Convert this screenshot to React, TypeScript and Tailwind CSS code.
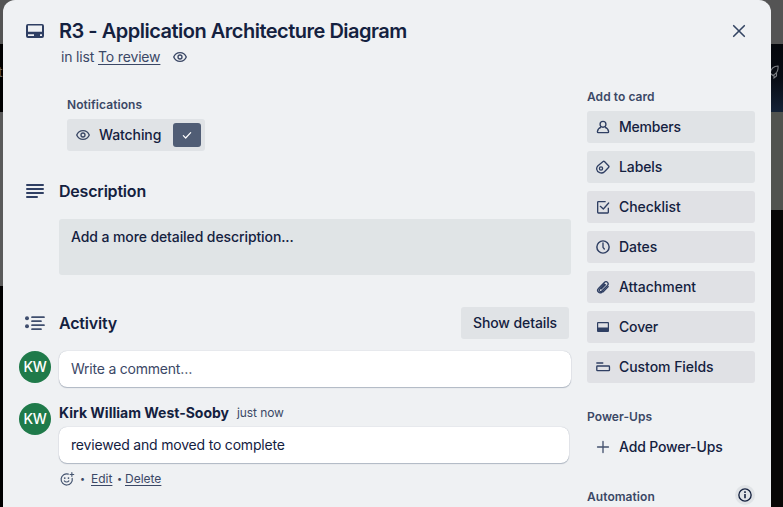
import type { ReactNode } from 'react';

const Svg = ({ size = 16, className = '', children }: { size?: number; className?: string; children: ReactNode }) => (
  <svg width={size} height={size} viewBox="0 0 24 24" fill="none" stroke="currentColor" strokeWidth="2" className={`shrink-0 ${className}`}>
    {children}
  </svg>
);

const EyeIcon = ({ className = '' }: { className?: string }) => (
  <Svg className={className}>
    <path d="M2.600 12C4.200 8 7.600 5.500 12 5.500s7.800 2.500 9.400 6.500c-1.600 4-5 6.500-9.400 6.500S4.200 16 2.600 12Z" />
    <circle cx="12" cy="12" r="3" />
  </Svg>
);

const CardIcon = () => (
  <Svg size={24}>
    <path fill="currentColor" stroke="none" fillRule="evenodd" d="M5 5a2 2 0 0 0-2 2v10a2 2 0 0 0 2 2h14a2 2 0 0 0 2-2V7a2 2 0 0 0-2-2H5Zm0 1.500h14v6.200H5V6.500Zm0 8.700h6v1.800H5v-1.800Zm12 0h2v1.800h-2v-1.800Z" />
  </Svg>
);

const LinesIcon = () => (
  <Svg size={24}>
    <path strokeLinecap="round" d="M4 6h16M4 10h16M4 14h16M4 18h10" />
  </Svg>
);

const ActivityIcon = () => (
  <Svg size={24}>
    <circle cx="4" cy="7.200" r="2" fill="currentColor" stroke="none" />
    <circle cx="4" cy="15.300" r="2" fill="currentColor" stroke="none" />
    <path strokeWidth="1.700" strokeLinecap="round" d="M9 6.200h12M9 10.200h9M9 14.200h12M9 18.200h9" />
  </Svg>
);

const MemberIcon = () => (
  <Svg>
    <circle cx="12" cy="8" r="4.400" />
    <path strokeLinejoin="round" d="M9 12.600C6 13.300 4 15.800 3.600 19c0 1 .4 1.500 1.200 1.500h14.400c.8 0 1.200-.5 1.200-1.500-.4-3.200-2.400-5.700-5.400-6.400" />
  </Svg>
);

const LabelIcon = () => (
  <Svg>
    <path strokeLinejoin="round" d="M12.200 3.800c.6-.5 1.400-.5 2 0l6.400 6.700c.5.600.5 1.400 0 2l-6.400 6.500A7 7 0 0 1 2.400 15c0-2 .7-3.700 2-4.900l7.800-6.300Z" />
    <circle cx="9" cy="14.300" r="2.400" />
  </Svg>
);

const ChecklistIcon = () => (
  <Svg>
    <path strokeLinejoin="round" d="M16 4H5a1 1 0 0 0-1 1v15a1 1 0 0 0 1 1h14a1 1 0 0 0 1-1v-7" />
    <path strokeLinecap="round" strokeLinejoin="round" d="m8 11 4.500 4L20.500 6" />
  </Svg>
);

const ClockIcon = () => (
  <Svg>
    <circle cx="12" cy="12" r="9.200" strokeWidth="2.200" />
    <path strokeLinecap="round" strokeLinejoin="round" d="M12 6v6.500l2 2.500" />
  </Svg>
);

const ClipIcon = () => (
  <Svg>
    <path strokeWidth="1.900" strokeLinecap="round" d="m11.400 19-.9.700c-1.800 1.400-4.100 1.200-5.400-.2-1.500-1.500-1.400-4 .1-5.500L14 5.200c1.400-1.400 3.500-1.500 4.800-.2 1.300 1.400 1.200 3.400-.1 4.800L10.300 18c-1.100 1-2.400 1-3.300.2-.9-1-.8-2.300.2-3.300l7.100-7M19.900 11.500l-7.600 7.600M15 8.200l.6.500-6 6.100" />
  </Svg>
);

const CoverIcon = () => (
  <Svg>
    <path fill="currentColor" stroke="none" fillRule="evenodd" d="M4.500 4.500A1.500 1.500 0 0 0 3 6v12a1.500 1.500 0 0 0 1.500 1.500h15A1.500 1.500 0 0 0 21 18V6a1.500 1.500 0 0 0-1.500-1.500h-15Zm.3 2h14.400v6.200H4.800V6.500Z" />
  </Svg>
);

const FieldsIcon = () => (
  <Svg>
    <path strokeLinecap="round" d="M2.700 6h9" />
    <rect x="2.700" y="10.500" width="19" height="7" rx="1" />
  </Svg>
);

const PlusIcon = () => (
  <Svg className="text-[#44516e]">
    <path strokeLinecap="round" d="M12 3.800v16.400M3.800 12h16.400" />
  </Svg>
);

const SmileIcon = () => (
  <Svg className="text-[#44546f]">
    <path strokeWidth="1.800" strokeLinecap="round" d="M14 4.600A8.400 8.400 0 1 0 19.800 11" />
    <path strokeWidth="1.700" strokeLinecap="round" d="M8 14.800c1.600 2.300 5.200 2.300 6.800 0M19.300 2.500v5.500M16.600 5.200h5.500" />
    <circle cx="8.600" cy="10.600" r="1.300" fill="currentColor" stroke="none" />
    <circle cx="14.200" cy="10.600" r="1.300" fill="currentColor" stroke="none" />
  </Svg>
);

const Avatar = () => (
  <div className="flex size-8 shrink-0 items-center justify-center rounded-full bg-[#1f7a4a] text-[14px] font-medium tracking-[-0.3px] text-white">KW</div>
);

const actions = [
  { label: 'Members', icon: <MemberIcon />, tone: 'bg-[#e0e3e6]', track: 'tracking-[-0.2px]' },
  { label: 'Labels', icon: <LabelIcon />, tone: 'bg-[#e0e3e6]', track: 'tracking-[-0.1px]' },
  { label: 'Checklist', icon: <ChecklistIcon />, tone: 'bg-[#e0e1e5]', track: 'tracking-[-0.05px]' },
  { label: 'Dates', icon: <ClockIcon />, tone: 'bg-[#e0e1e5]', track: 'tracking-[-0.05px]' },
  { label: 'Attachment', icon: <ClipIcon />, tone: 'bg-[#e0e1e5]', track: 'tracking-normal' },
  { label: 'Cover', icon: <CoverIcon />, tone: 'bg-[#e0e1e5]', track: 'tracking-[-0.15px]' },
  { label: 'Custom Fields', icon: <FieldsIcon />, tone: 'bg-[#e0e1e5]', track: 'tracking-[-0.05px]' },
];

const Backdrop = () => (
  <div className="absolute inset-0 flex justify-between bg-[#545454]">
    <div className="flex w-4 flex-col">
      <div className="h-11" />
      <div className="h-[68px] bg-black pt-[18px] text-[14px] text-[#686868]">
        <span className="-ml-0.5">t</span>
      </div>
      <div className="h-[174px] bg-[#5a5a5a]" />
      <div className="grow bg-black" />
    </div>
    <div className="flex w-4 flex-col">
      <div className="h-11" />
      <div className="flex h-[68px] justify-end bg-linear-to-b from-[#05070c] via-[#080c14] to-[#142237] pt-[21px] pr-1">
        <svg width="12" height="14" viewBox="0 0 12 14" fill="none" stroke="#7c7f84" strokeWidth="1.100" className="shrink-0">
          <path d="M11 1C7 1 4 4 3 8l3 2.500C10 8.500 11.500 5 11 1ZM4.500 5 1.500 6l-.5 3M7 10v3l2.500-2V8" />
        </svg>
      </div>
      <div className="h-[98px] bg-[#51534f]" />
      <div className="grow bg-[#080706]" />
    </div>
  </div>
);

export default function App() {
  return (
    <div className="relative h-[507px] w-[783px] overflow-hidden font-['Inter',sans-serif] text-[14px] leading-5 text-[#14213f]">
      <Backdrop />
      <div className="relative ml-[3px] flex h-full w-[768px] rounded-t-[12px] bg-[#eff1f3]">
        <main className="flex w-[568px] flex-col pl-4">
          <header className="mt-[19px] flex items-center text-[#2f3f63]">
            <div className="ml-1 w-9"><CardIcon /></div>
            <h1 className="text-[20px] leading-6 font-semibold tracking-[-0.5px] whitespace-nowrap text-[#14213f]">R3 - Application Architecture Diagram</h1>
          </header>
          <div className="mt-1 ml-[42px] flex h-5 items-center text-[#3b4866]">
            <p className="tracking-[-0.16px]">in list <span className="underline underline-offset-2">To review</span></p>
            <EyeIcon className="ml-3" />
          </div>

          <section className="mt-[30px] ml-12">
            <h3 className="h-4 text-[12px] leading-4 font-semibold tracking-[0.06px] text-[#3b4866]">Notifications</h3>
            <div className="mt-1.5 flex h-8 w-[138px] items-center rounded-[3px] bg-[#e0e3e6] pl-2">
              <EyeIcon className="text-[#3b4866]" />
              <span className="ml-2 w-[74px] font-medium tracking-[-0.1px]">Watching</span>
              <div className="flex h-6 w-7 items-center justify-center rounded-[3px] bg-[#505d75] text-white">
                <Svg><path strokeWidth="1.800" strokeLinecap="round" strokeLinejoin="round" d="m6.500 13 3.500 3.500 7.500-8" /></Svg>
              </div>
            </div>
          </section>

          <section className="mt-7">
            <div className="flex h-6 items-center">
              <div className="ml-1 w-9 text-[#2f3f63]"><LinesIcon /></div>
              <h2 className="text-[16px] font-semibold tracking-[-0.2px]">Description</h2>
            </div>
            <div className="mt-4 ml-10 h-14 w-[512px] rounded-[3px] bg-[#e0e4e6] px-3 py-2 font-medium tracking-[-0.1px]">Add a more detailed description...</div>
          </section>

          <section className="mt-8">
            <div className="flex h-8 items-center">
              <div className="ml-1 w-9 text-[#3f4e6e]"><ActivityIcon /></div>
              <h2 className="w-[402px] text-[16px] font-semibold tracking-[-0.2px]">Activity</h2>
              <button className="h-8 w-[108px] rounded-[3px] bg-[#e0e3e6] font-medium tracking-[-0.1px] whitespace-nowrap">Show details</button>
            </div>
            <div className="mt-3 flex gap-2">
              <Avatar />
              <div className="h-9 w-[512px] rounded-lg bg-white px-3 py-2 tracking-[-0.22px] text-[#3b4866] shadow-[0_1px_1px_#091e4240,0_0_1px_#091e424f]">Write a comment…</div>
            </div>
            <div className="mt-4 flex gap-2">
              <Avatar />
              <div className="w-[510px]">
                <div className="flex h-5 items-center">
                  <span className="font-bold">Kirk William West-Sooby</span>
                  <span className="ml-2 text-[12px] tracking-[-0.1px] text-[#3b4866]">just now</span>
                </div>
                <div className="mt-1 h-9 rounded-lg bg-white px-3 py-2 tracking-[-0.19px] shadow-[0_1px_1px_#091e4240,0_0_1px_#091e424f]">reviewed and moved to complete</div>
                <div className="mt-1.5 flex h-5 items-center text-[12px] text-[#3b4866]">
                  <SmileIcon />
                  <span className="ml-[5px] w-3 text-[9px]">•</span>
                  <span className="ml-[-1px] w-[26px] underline underline-offset-2">Edit</span>
                  <span className="w-2 text-[9px]">•</span>
                  <span className="underline underline-offset-2">Delete</span>
                </div>
              </div>
            </div>
          </section>
        </main>

        <aside className="ml-4 flex w-[168px] flex-col">
          <button className="mt-[19px] mr-1 flex size-6 items-center justify-center self-end text-[#344563]">
            <Svg size={24}><path strokeWidth="1.600" strokeLinecap="round" d="m6.700 6.700 10.600 10.600m0-10.600-10.600 10.600" /></Svg>
          </button>
          <h3 className="mt-[46px] h-4 text-[12px] leading-4 font-semibold tracking-[0.06px] text-[#3b4866]">Add to card</h3>
          <div className="mt-1.5 flex flex-col gap-2">
            {actions.map((a) => (
              <button key={a.label} className={`flex h-8 items-center gap-2 rounded-[3px] pl-2 font-medium ${a.tone}`}>
                <span className="text-[#2f3f63]">{a.icon}</span>
                <span className={a.track}>{a.label}</span>
              </button>
            ))}
          </div>
          <h3 className="mt-[26px] h-4 text-[12px] leading-4 font-semibold tracking-[0.06px] text-[#3b4866]">Power-Ups</h3>
          <button className="mt-1.5 flex h-8 items-center gap-2 pl-2 font-medium tracking-[-0.15px]">
            <PlusIcon />
            <span>Add Power-Ups</span>
          </button>
          <div className="mt-[22px] flex h-5 items-center justify-between">
            <h3 className="mt-1 text-[12px] leading-4 font-semibold tracking-[0.06px] text-[#3b4866]">Automation</h3>
            <div className="flex size-5 items-center justify-center rounded-full bg-[#e0e3e6]">
              <Svg><circle cx="12" cy="12" r="9.200" /><path d="M12 10.500v6.500M12 6.500v2.500" strokeWidth="2.400" /></Svg>
            </div>
          </div>
        </aside>
      </div>
    </div>
  );
}
